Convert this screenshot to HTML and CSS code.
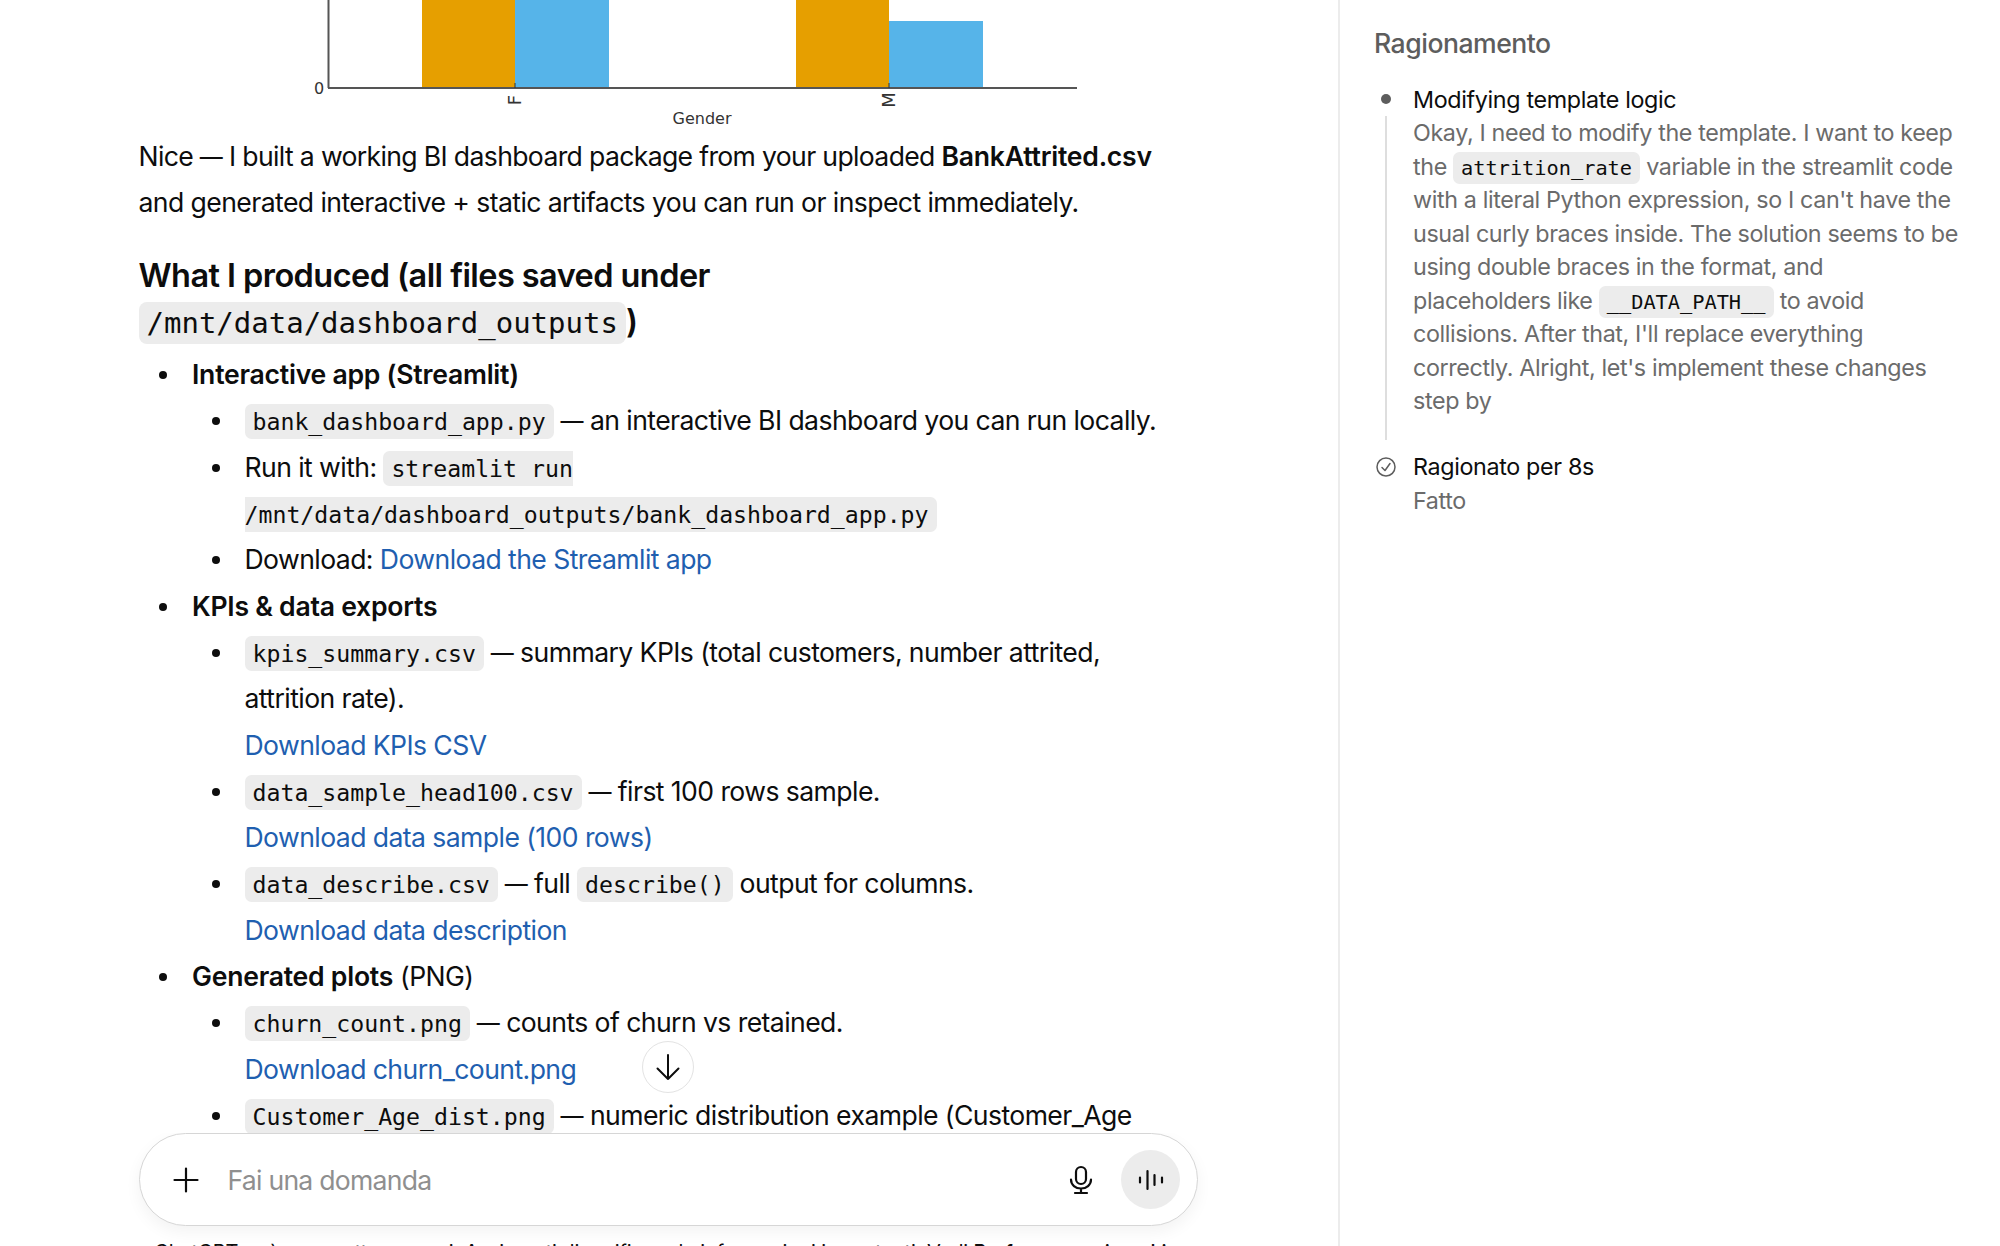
FILE: index.html
```html
<!DOCTYPE html>
<html lang="it">
<head>
<meta charset="utf-8">
<title>Ragionamento</title>
<link rel="stylesheet" href="styles.css">
</head>
<body>
<div class="app">
  <main class="main">
    <div class="thread">
      <div class="content">
        <svg class="chart" viewBox="139 0 1061 133" width="1061" height="133" aria-label="Chart by gender">
          <rect class="bar-a" x="422" y="0" width="93" height="88"/>
          <rect class="bar-b" x="515" y="0" width="94" height="88"/>
          <rect class="bar-a" x="796" y="0" width="93" height="88"/>
          <rect class="bar-b" x="889" y="21" width="94" height="67"/>
          <path class="axis" d="M328.500 0V88M328 88H1077"/>
          <path class="tick" d="M515 83V88M889 83V88"/>
          <text class="chart-label" x="319" y="94" text-anchor="middle">0</text>
          <text class="chart-label chart-tick" transform="translate(521 100) rotate(-90)" text-anchor="middle">F</text>
          <text class="chart-label chart-tick" transform="translate(895 100) rotate(-90)" text-anchor="middle">M</text>
          <text class="chart-label" x="702" y="124" text-anchor="middle">Gender</text>
        </svg>
        <p class="para">Nice <span class="dash">—</span> I built a working BI dashboard package from your uploaded <strong>BankAttrited.csv</strong><br>and generated interactive + static artifacts you can run or inspect immediately.</p>
        <h3 class="heading">What I produced (all files saved under<br><code class="code code-lg">/mnt/data/dashboard_outputs</code>)</h3>
        <ul class="list">
          <li><strong>Interactive app (Streamlit)</strong>
            <ul class="list sub">
              <li><code class="code">bank_dashboard_app.py</code> <span class="dash">—</span> an interactive BI dashboard you can run locally.</li>
              <li>Run it with: <code class="code">streamlit run<br>/mnt/data/dashboard_outputs/bank_dashboard_app.py</code></li>
              <li>Download: <a class="link" href="#">Download the Streamlit app</a></li>
            </ul>
          </li>
          <li><strong>KPIs &amp; data exports</strong>
            <ul class="list sub">
              <li><code class="code">kpis_summary.csv</code> <span class="dash">—</span> summary KPIs (total customers, number attrited,<br>attrition rate).<br><a class="link" href="#">Download KPIs CSV</a></li>
              <li><code class="code">data_sample_head100.csv</code> <span class="dash">—</span> first 100 rows sample.<br><a class="link" href="#">Download data sample (100 rows)</a></li>
              <li><code class="code">data_describe.csv</code> <span class="dash">—</span> full <code class="code">describe()</code> output for columns.<br><a class="link" href="#">Download data description</a></li>
            </ul>
          </li>
          <li><strong>Generated plots</strong> (PNG)
            <ul class="list sub">
              <li><code class="code">churn_count.png</code> <span class="dash">—</span> counts of churn vs retained.<br><a class="link" href="#">Download churn_count.png</a></li>
              <li><code class="code">Customer_Age_dist.png</code> <span class="dash">—</span> numeric distribution example (Customer_Age</li>
            </ul>
          </li>
        </ul>
      </div>
      <button class="scroll-down" type="button" aria-label="Scorri in basso">
        <svg width="30" height="30" viewBox="0 0 30 30" fill="none" stroke="#0d0d0d" stroke-width="2" stroke-linecap="round" stroke-linejoin="round"><path d="M15 3V27M4.500 16.500L15 27L25.500 16.500"/></svg>
      </button>
    </div>
    <footer class="footer">
      <div class="composer">
        <svg class="plus" width="26" height="26" viewBox="0 0 26 26" fill="none" stroke="#0d0d0d" stroke-width="2.200" stroke-linecap="round"><path d="M13 1.500V24.500M1.500 13H24.500"/></svg>
        <span class="placeholder">Fai una domanda</span>
        <svg class="mic" width="24" height="30" viewBox="0 0 24 30" fill="none" stroke="#0d0d0d" stroke-width="2.200" stroke-linecap="round"><rect x="7" y="2" width="10" height="17" rx="5"/><path d="M2 14.500C2 20 6.500 23.500 12 23.500S22 20 22 14.500M12 23.500V28M6 28H18"/></svg>
        <span class="voice">
          <svg width="26" height="22" viewBox="0 0 26 22" fill="none" stroke="#0d0d0d" stroke-width="2.200" stroke-linecap="round"><path d="M2 8.500V13.500M9.500 2V20M16.500 6V16M24 8.500V13.500"/></svg>
        </span>
      </div>
      <p class="disclaimer">ChatGPT può commettere errori. Assicurati di verificare le informazioni importanti. Vedi <span class="strong">Preferenze sui cookie</span>.</p>
    </footer>
  </main>
  <aside class="side">
    <h2 class="side-title">Ragionamento</h2>
    <section class="step">
      <div class="rail"><span class="dot-wrap"><span class="dot"></span></span><span class="rail-line"></span></div>
      <div class="step-body">
        <div class="step-title">Modifying template logic</div>
        <p class="step-text">Okay, I need to modify the template. I want to keep<br>the <code class="code code-sm">attrition_rate</code> variable in the streamlit code<br>with a literal Python expression, so I can't have the<br>usual curly braces inside. The solution seems to be<br>using double braces in the format, and<br>placeholders like <code class="code code-sm">__DATA_PATH__</code> to avoid<br>collisions. After that, I'll replace everything<br>correctly. Alright, let's implement these changes<br>step by</p>
      </div>
    </section>
    <section class="step step-done">
      <div class="rail"><span class="dot-wrap">
        <svg width="20" height="20" viewBox="0 0 20 20" fill="none" stroke="#5d5d5d" stroke-width="1.500" stroke-linecap="round" stroke-linejoin="round"><circle cx="10" cy="10" r="9"/><path d="M6 10.500L9 13.500L14 6.500"/></svg>
      </span></div>
      <div class="step-body">
        <div class="step-title">Ragionato per 8s</div>
        <p class="step-text">Fatto</p>
      </div>
    </section>
  </aside>
</div>
</body>
</html>
```
FILE: styles.css
```css
* { box-sizing: border-box; }
html, body { margin: 0; height: 100%; background: #fff; }
body { font-family: Inter, "Liberation Sans", sans-serif; color: #0d0d0d; overflow: hidden; }

.app { display: flex; height: 1246px; overflow: hidden; }

/* Main column */
.main { width: 1338px; flex: none; display: flex; flex-direction: column; height: 100%; }
.thread { position: relative; flex: 1; min-height: 0; overflow: hidden; }
.content { width: 1061px; margin: 0 auto; font-size: 26.6px; line-height: 46.3px; letter-spacing: -0.58px; }

.chart { display: block; }
.bar-a { fill: #e69f00; }
.bar-b { fill: #56b4e9; }
.axis { stroke: #555; stroke-width: 2; fill: none; }
.tick { stroke: #333; stroke-width: 1; fill: none; }
.chart-label { font-family: "DejaVu Sans", sans-serif; font-size: 16px; fill: #333; letter-spacing: 0; }
.chart-tick { font-size: 18px; }

.para { margin: 0; }
.para::first-line { letter-spacing: -0.66px; }
.para strong, .list strong { font-weight: 600; letter-spacing: -0.25px; }
.dash { font-size: 23px; vertical-align: 1px; line-height: 1; }
.heading { margin: 27px 0 6px; font-size: 32.5px; line-height: 46.3px; font-weight: 600; letter-spacing: -0.57px; }

.list { margin: 0; padding: 0 0 0 53.5px; list-style: none; }
.sub { padding-left: 52.5px; }
.list li { position: relative; }
.list li::before {
  content: "";
  position: absolute;
  left: -33px;
  top: 20px;
  width: 8px;
  height: 8px;
  border-radius: 50%;
  background: #0d0d0d;
}
.link { color: #1f5fb0; text-decoration: none; }

.code {
  font-family: "DejaVu Sans Mono", monospace;
  font-size: 23.2px;
  line-height: 1;
  letter-spacing: 0;
  font-weight: 400;
  background: #ececec;
  border-radius: 6.500px;
  padding: 4px 8px;
}
.code-lg { font-size: 29px; border-radius: 8px; }
.code-sm { font-size: 20.3px; }

.scroll-down {
  position: absolute;
  left: 642px;
  bottom: 40px;
  width: 52px;
  height: 52px;
  padding: 0;
  display: flex;
  align-items: center;
  justify-content: center;
  background: #fff;
  border: 1.500px solid #e3e3e3;
  border-radius: 50%;
}

/* Composer */
.footer { flex: none; height: 113px; overflow: hidden; }
.composer {
  width: 1059.500px;
  height: 93px;
  margin: 0 0 0 138.500px;
  padding: 0 17px 0 33px;
  display: flex;
  align-items: center;
  background: #fff;
  border: 1.500px solid #d6d6d6;
  border-radius: 46.500px;
  box-shadow: 0 6px 16px rgba(0, 0, 0, 0.05);
}
.plus { flex: none; }
.placeholder { flex: 1; margin-left: 29px; font-size: 26.6px; letter-spacing: -0.75px; color: #8f8f8f; }
.mic { flex: none; margin-right: 28px; }
.voice {
  flex: none;
  width: 59px;
  height: 59px;
  display: flex;
  align-items: center;
  justify-content: center;
  border-radius: 50%;
  background: #ececec;
}
.disclaimer { margin: 12px 0 0; text-align: center; font-size: 20px; line-height: 28px; letter-spacing: -0.1px; color: #0d0d0d; }
.strong { font-weight: 500; }

/* Reasoning panel */
.side { flex: none; width: 662px; height: 100%; border-left: 2px solid #ececec; padding: 24px 40px 0 34px; }
.side-title { margin: 0 0 20.500px; font-size: 26.6px; line-height: 38px; font-weight: 500; letter-spacing: -0.5px; color: #5d5d5d; }
.step { display: grid; grid-template-columns: 24px 1fr; column-gap: 15px; }
.step-done { margin-top: 10px; }
.rail { display: flex; flex-direction: column; align-items: center; }
.dot-wrap { height: 33.500px; flex: none; display: flex; align-items: center; justify-content: center; }
.dot { width: 10px; height: 10px; border-radius: 50%; background: #5d5d5d; }
.rail-line { flex: 1; width: 2px; background: #dedede; }
.step-title { font-size: 23.3px; line-height: 33.500px; letter-spacing: -0.35px; color: #0d0d0d; }
.step-text { margin: 0; font-size: 23.3px; line-height: 33.500px; letter-spacing: -0.37px; color: #6b6b6b; }
.step:not(.step-done) .step-body { padding-bottom: 22.500px; }
.step-text .code { color: #0d0d0d; }
```
